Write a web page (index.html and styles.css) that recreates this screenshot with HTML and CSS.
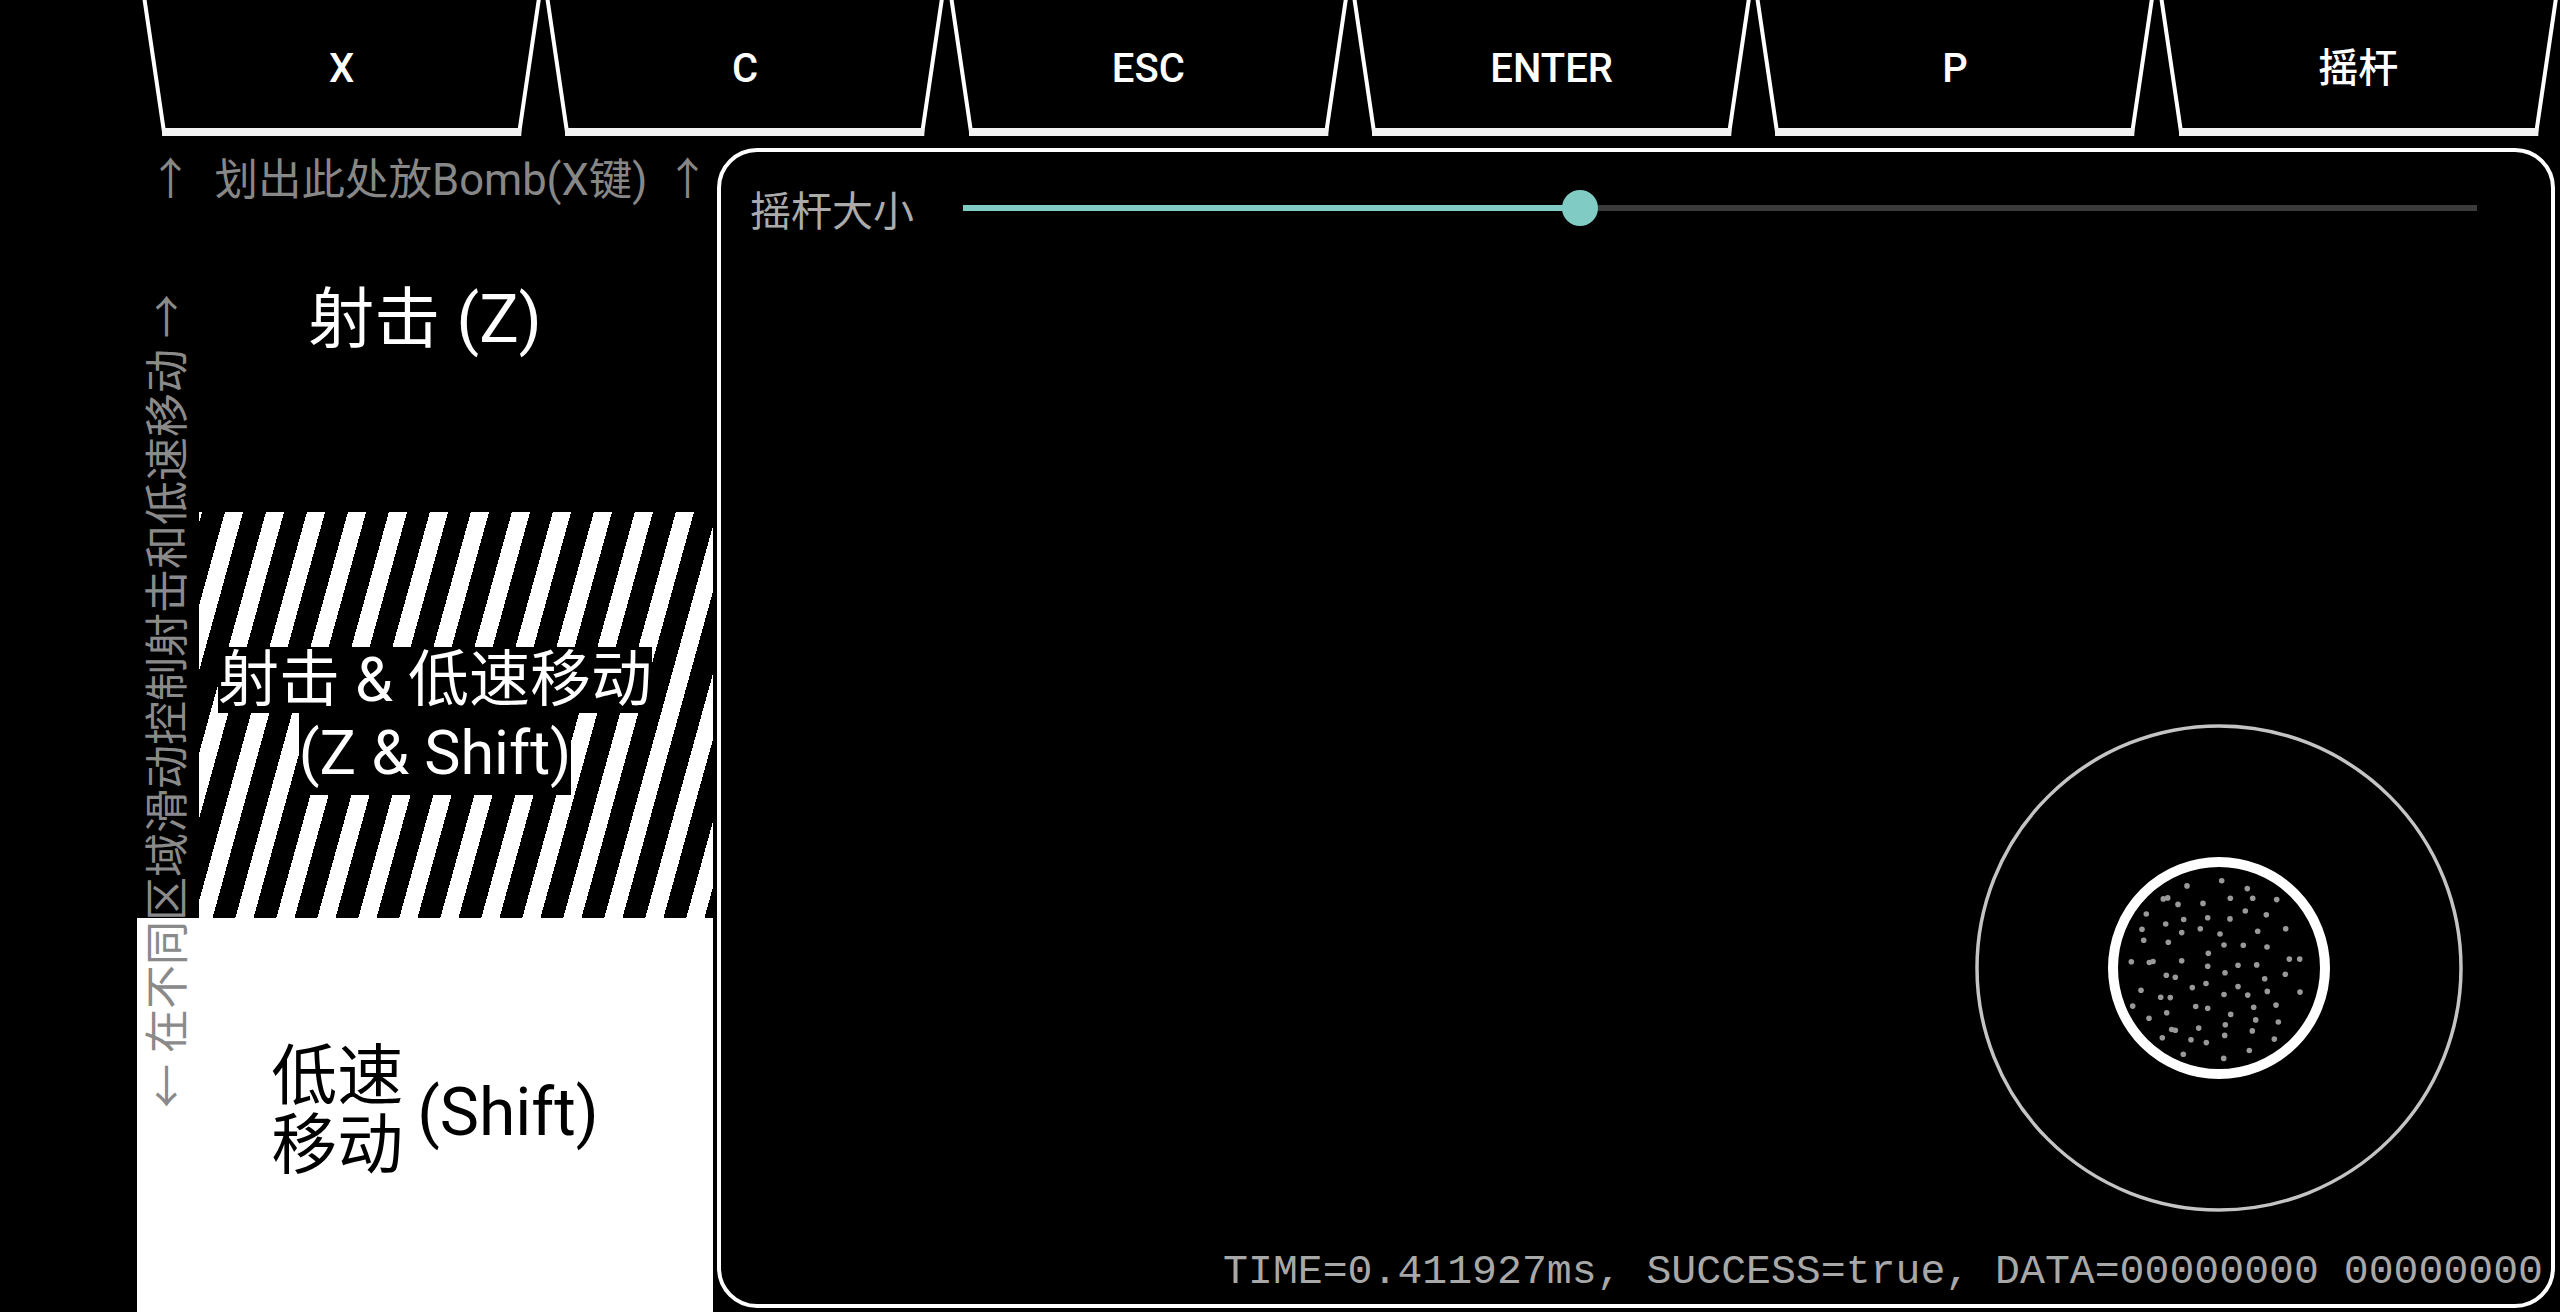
FILE: index.html
```html
<!DOCTYPE html>
<html lang="zh-CN">
<head>
<meta charset="utf-8">
<title>Touch Controls</title>
<link rel="stylesheet" href="styles.css">
</head>
<body>
<div class="screen">
  <div class="keys">
    <div class="key"><svg class="key-shape" viewBox="0 0 403 137" preserveAspectRatio="none"><polyline points="4,-4 24,132 379,132 399,-4" class="key-side"/><line x1="22" y1="132" x2="381" y2="132" class="key-bottom"/></svg><span class="key-label">X</span></div>
    <div class="key"><svg class="key-shape" viewBox="0 0 403 137" preserveAspectRatio="none"><polyline points="4,-4 24,132 379,132 399,-4" class="key-side"/><line x1="22" y1="132" x2="381" y2="132" class="key-bottom"/></svg><span class="key-label">C</span></div>
    <div class="key"><svg class="key-shape" viewBox="0 0 403 137" preserveAspectRatio="none"><polyline points="4,-4 24,132 379,132 399,-4" class="key-side"/><line x1="22" y1="132" x2="381" y2="132" class="key-bottom"/></svg><span class="key-label">ESC</span></div>
    <div class="key"><svg class="key-shape" viewBox="0 0 403 137" preserveAspectRatio="none"><polyline points="4,-4 24,132 379,132 399,-4" class="key-side"/><line x1="22" y1="132" x2="381" y2="132" class="key-bottom"/></svg><span class="key-label">ENTER</span></div>
    <div class="key"><svg class="key-shape" viewBox="0 0 403 137" preserveAspectRatio="none"><polyline points="4,-4 24,132 379,132 399,-4" class="key-side"/><line x1="22" y1="132" x2="381" y2="132" class="key-bottom"/></svg><span class="key-label">P</span></div>
    <div class="key"><svg class="key-shape" viewBox="0 0 403 137" preserveAspectRatio="none"><polyline points="4,-4 24,132 379,132 399,-4" class="key-side"/><line x1="22" y1="132" x2="381" y2="132" class="key-bottom"/></svg><span class="key-label">摇杆</span></div>
  </div>
  <div class="main">
    <div class="left">
      <div class="bomb-hint"><span class="arrow-l">↑</span>划出此处放Bomb(X键)<span class="arrow-r">↑</span></div>
      <div class="zone-shoot"><span>射击 (Z)</span></div>
      <div class="zone-both">
        <span class="both-line1">射击 &amp; 低速移动</span>
        <span class="both-line2">(Z &amp; Shift)</span>
      </div>
      <div class="zone-slow">
        <div class="slow-cn">低速<br>移动</div>
        <div class="slow-en">(Shift)</div>
      </div>
      <div class="side-hint">← 在不同区域滑动控制射击和低速移动 →</div>
    </div>
    <div class="panel">
      <div class="slider-row">
        <span class="slider-label">摇杆大小</span>
        <div class="slider">
          <div class="slider-fill" style="width:40.75%"><div class="slider-thumb"></div></div>
        </div>
      </div>
      <div class="stage">
        <svg class="joystick" width="490" height="490" viewBox="-245 -245 490 490">
          <circle r="242" class="ring-outer"/>
          <circle r="106" class="ring-inner"/>
          <g class="dots">
            <circle cx="2.7" cy="-87.3" r="2.8"/><circle cx="-32" cy="-82.1" r="2.8"/><circle cx="28.3" cy="-79.4" r="2.8"/>
            <circle cx="-55.7" cy="-69.1" r="2.8"/><circle cx="-51.3" cy="-70.1" r="2.8"/><circle cx="11.3" cy="-69.8" r="2.8"/>
            <circle cx="33.7" cy="-69.8" r="2.8"/><circle cx="57.7" cy="-68.4" r="2.8"/><circle cx="-41" cy="-63.6" r="2.8"/>
            <circle cx="-16" cy="-64.6" r="2.8"/><circle cx="-72.7" cy="-54" r="2.8"/><circle cx="-11.3" cy="-50.2" r="2.8"/>
            <circle cx="-35.3" cy="-48.5" r="2.8"/><circle cx="11" cy="-49.1" r="2.8"/><circle cx="26.3" cy="-57" r="2.8"/>
            <circle cx="47.3" cy="-53.3" r="2.8"/><circle cx="-53.3" cy="-44" r="2.8"/><circle cx="-77" cy="-38.8" r="2.8"/>
            <circle cx="-18.7" cy="-39.2" r="2.8"/><circle cx="-37.3" cy="-35.4" r="2.8"/><circle cx="1" cy="-34" r="2.8"/>
            <circle cx="38.7" cy="-36.8" r="2.8"/><circle cx="66.7" cy="-39.2" r="2.8"/><circle cx="-75.3" cy="-27.8" r="2.8"/>
            <circle cx="-50.7" cy="-25.8" r="2.8"/><circle cx="5" cy="-23" r="2.8"/><circle cx="24.3" cy="-22.7" r="2.8"/>
            <circle cx="48" cy="-21" r="2.8"/><circle cx="-10.7" cy="-14.8" r="2.8"/><circle cx="-87.7" cy="-6.2" r="2.8"/>
            <circle cx="-69.7" cy="-5.5" r="2.8"/><circle cx="-66" cy="-6.5" r="2.8"/><circle cx="-37.3" cy="-7.2" r="2.8"/>
            <circle cx="-11.3" cy="-1.7" r="2.8"/><circle cx="19" cy="-2.7" r="2.8"/><circle cx="37.7" cy="-3.1" r="2.8"/>
            <circle cx="70.3" cy="-8.9" r="2.8"/><circle cx="80.7" cy="-8.9" r="2.8"/><circle cx="6" cy="4.8" r="2.8"/>
            <circle cx="-52.7" cy="7.2" r="2.8"/><circle cx="-43.7" cy="9.3" r="2.8"/><circle cx="45.7" cy="10.7" r="2.8"/>
            <circle cx="66.3" cy="6.2" r="2.8"/><circle cx="-13" cy="15.5" r="2.8"/><circle cx="-26.7" cy="19.6" r="2.8"/>
            <circle cx="19" cy="18.6" r="2.8"/><circle cx="48.3" cy="23.4" r="2.8"/><circle cx="-78" cy="22.3" r="2.8"/>
            <circle cx="5" cy="26.5" r="2.8"/><circle cx="28.7" cy="27.1" r="2.8"/><circle cx="81" cy="24.1" r="2.8"/>
            <circle cx="-58.3" cy="29.2" r="2.8"/><circle cx="-48.7" cy="29.6" r="2.8"/><circle cx="-86.3" cy="38.1" r="2.8"/>
            <circle cx="-23.3" cy="38.5" r="2.8"/><circle cx="-11.3" cy="40.2" r="2.8"/><circle cx="34.7" cy="39.2" r="2.8"/>
            <circle cx="57" cy="37.1" r="2.8"/><circle cx="-52.3" cy="44.7" r="2.8"/><circle cx="11.7" cy="46.4" r="2.8"/>
            <circle cx="-70" cy="50.2" r="2.8"/><circle cx="36.7" cy="51.9" r="2.8"/><circle cx="59.3" cy="54" r="2.8"/>
            <circle cx="-47.3" cy="61.5" r="2.8"/><circle cx="-43.7" cy="62.2" r="2.8"/><circle cx="-20.3" cy="60.1" r="2.8"/>
            <circle cx="6.3" cy="56.7" r="2.8"/><circle cx="33.3" cy="62.9" r="2.8"/><circle cx="-56.7" cy="69.8" r="2.8"/>
            <circle cx="-28" cy="71.8" r="2.8"/><circle cx="-12.7" cy="74.6" r="2.8"/><circle cx="5.7" cy="67.4" r="2.8"/>
            <circle cx="55.3" cy="71.1" r="2.8"/><circle cx="30.3" cy="82.5" r="2.8"/><circle cx="-35.7" cy="86.3" r="2.8"/>
            <circle cx="4.7" cy="90.4" r="2.8"/>
          </g>
        </svg>
      </div>
      <div class="status">TIME=0.411927ms, SUCCESS=true, DATA=00000000 00000000</div>
    </div>
  </div>
</div>
</body>
</html>
```

FILE: styles.css
```css
* {
  box-sizing: border-box;
}

html, body {
  margin: 0;
  padding: 0;
  background: #000;
}

body {
  width: 2560px;
  height: 1312px;
  overflow: hidden;
  font-family: Roboto, "Noto Sans CJK SC", sans-serif;
  color: #fff;
}

.screen {
  width: 2560px;
  height: 1312px;
  display: flex;
  flex-direction: column;
}

/* ---------- key row ---------- */
.keys {
  display: flex;
  height: 137px;
  padding-left: 140px;
  flex: none;
}

.key {
  position: relative;
  flex: none;
  width: 403.33px;
  height: 137px;
  display: flex;
  align-items: center;
  justify-content: center;
}

.key-shape {
  position: absolute;
  left: 0;
  top: 0;
  width: 100%;
  height: 100%;
}

.key-side {
  fill: none;
  stroke: #fff;
  stroke-width: 4;
  stroke-linejoin: miter;
}

.key-bottom {
  stroke: #f2f2f2;
  stroke-width: 8;
}

.key-label {
  position: relative;
  font-size: 40px;
  font-weight: 500;
  color: #fff;
  line-height: 1;
}

/* ---------- main area ---------- */
.main {
  display: flex;
  height: 1175px;
  flex: none;
}

.left {
  position: relative;
  width: 576px;
  margin-left: 137px;
  display: flex;
  flex-direction: column;
  flex: none;
}

.bomb-hint {
  height: 86px;
  line-height: 86px;
  padding-left: 8px;
  text-align: center;
  font-size: 43.5px;
  color: #878787;
  white-space: nowrap;
}

.arrow-l {
  font-size: 44px;
  margin-right: 22px;
}

.arrow-r {
  font-size: 44px;
  margin-left: 18px;
}

.zone-shoot {
  height: 289px;
  padding-top: 59px;
  text-align: center;
  font-size: 66px;
  line-height: 76px;
  color: #fff;
  white-space: nowrap;
}

.zone-both {
  height: 406px;
  width: 514px;
  margin-left: 62px;
  padding: 135px 42px 0 0;
  display: flex;
  flex-direction: column;
  align-items: center;
  background: repeating-linear-gradient(105.5deg, #fff 0 3px, #000 3px 25px, #fff 25px 39.5px);
}

.both-line1,
.both-line2 {
  display: block;
  background: #000;
  color: #fff;
  font-size: 61px;
  white-space: nowrap;
}

.both-line1 {
  height: 66px;
  line-height: 66px;
}

.both-line2 {
  height: 82px;
  line-height: 80px;
}

.zone-slow {
  flex: 1;
  background: #fff;
  color: #000;
  display: flex;
  align-items: center;
  justify-content: center;
  gap: 14px;
  padding: 0 0 8px 20px;
}

.slow-cn {
  font-size: 66px;
  line-height: 69px;
}

.slow-en {
  font-size: 66px;
  line-height: 76px;
  padding-top: 4px;
}

.side-hint {
  position: absolute;
  left: 9px;
  top: 114px;
  width: 44px;
  height: 900px;
  line-height: 44px;
  text-align: center;
  font-size: 44px;
  color: #8a8a8a;
  white-space: nowrap;
  writing-mode: vertical-rl;
  text-orientation: sideways;
  transform: rotate(180deg);
}

/* ---------- right panel ---------- */
.panel {
  width: 1838px;
  height: 1160px;
  margin: 11px 0 0 4px;
  border: 4px solid #fff;
  border-radius: 40px;
  display: flex;
  flex-direction: column;
  flex: none;
}

.slider-row {
  height: 60px;
  margin-top: 26px;
  padding: 0 74px 0 29px;
  display: flex;
  align-items: center;
  flex: none;
}

.slider-label {
  font-size: 41px;
  color: #ababab;
  margin-right: 49px;
  white-space: nowrap;
}

.slider {
  flex: 1;
  height: 6px;
  background: #3b3b3b;
}

.slider-fill {
  position: relative;
  height: 100%;
  background: #80cbc4;
}

.slider-thumb {
  position: absolute;
  right: -18px;
  top: 50%;
  width: 36px;
  height: 36px;
  margin-top: -18px;
  border-radius: 50%;
  background: #80cbc4;
}

.stage {
  flex: 1;
  display: flex;
  justify-content: flex-end;
  align-items: flex-end;
  padding: 0 87px 35px 0;
}

.joystick {
  display: block;
}

.ring-outer {
  fill: none;
  stroke: #c4c4c4;
  stroke-width: 3.5;
}

.ring-inner {
  fill: none;
  stroke: #fff;
  stroke-width: 10;
}

.dots circle {
  fill: #999;
}

.status {
  height: 48px;
  line-height: 48px;
  margin-bottom: 8px;
  padding-right: 8px;
  text-align: right;
  font-family: "Liberation Mono", "DejaVu Sans Mono", monospace;
  font-size: 41.5px;
  color: #a8a8a8;
  white-space: pre;
  flex: none;
}
```
